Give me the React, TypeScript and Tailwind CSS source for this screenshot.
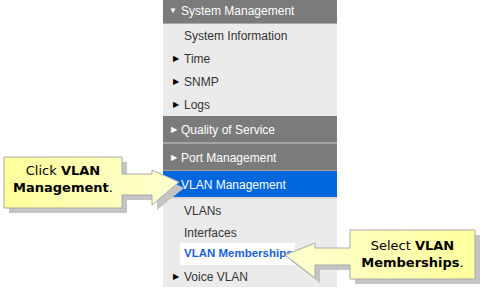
export default function App() {
  const header = "h-[26px] shrink-0 flex items-center pt-[1px] text-white text-[12px] bg-[#7b7b7b]"
  const item = "h-[22px] shrink-0 flex items-center pt-[1px] text-[12px] text-[#333]"

  return (
    <div className="relative w-[487px] h-[295px] bg-white overflow-hidden font-['Liberation_Sans',Arial,sans-serif]">
      {/* menu panel */}
      <div className="ml-[163px] w-[174px] bg-[#ebebeb] flex flex-col">
        <div className={`${header} -mt-[3px] pl-[6px]`}>
          <span className="text-[8px] w-[12px]">▼</span>
          <span>System Management</span>
        </div>
        <div className="h-[1px] bg-[#a9a9a9]" />
        <div className="flex flex-col">
          <div className={`${item} h-[23px] pl-[21px]`}>System Information</div>
          <div className={`${item} h-[23px] pl-[10px]`}>
            <span className="text-[8px] w-[11px] text-black">▶</span>Time
          </div>
          <div className={`${item} h-[23px] pl-[10px]`}>
            <span className="text-[8px] w-[11px] text-black">▶</span>SNMP
          </div>
          <div className={`${item} h-[23px] pl-[10px]`}>
            <span className="text-[8px] w-[11px] text-black">▶</span>Logs
          </div>
        </div>
        <div className={`${header} pl-[8px]`}>
          <span className="text-[8px] w-[10px]">▶</span>
          <span>Quality of Service</span>
        </div>
        <div className="h-[2px] bg-[#a3a3a3]" />
        <div className={`${header} pl-[8px]`}>
          <span className="text-[8px] w-[10px]">▶</span>
          <span>Port Management</span>
        </div>
        <div className="h-[1px] bg-[#a3a3a3]" />
        <div className="h-[26px] shrink-0 flex items-center pt-[1px] text-white text-[12px] bg-[#0066dd] pl-[18px]">
          VLAN Management
        </div>
        <div className="h-[2px] bg-[#d7d7d7]" />
        <div className="flex flex-col">
          <div className={`${item} pl-[21px]`}>VLANs</div>
          <div className={`${item} pl-[21px]`}>Interfaces</div>
          <div className="h-[22px] shrink-0 flex items-stretch pl-[17px]">
            <div className="w-[115px] bg-white flex items-center pl-[4px] whitespace-nowrap font-bold text-[11.5px] text-[#1a5fd6]">
              VLAN Memberships
            </div>
          </div>
          <div className={`${item} h-[21px] pt-[1px] pl-[10px]`}>
            <span className="text-[8px] w-[11px] text-black">▶</span>Voice VLAN
          </div>
        </div>
      </div>

      {/* callouts */}
      <svg className="absolute left-0 top-0" width="487" height="295">
        <defs>
          <linearGradient id="g1" x1="0" x2="1" y1="0" y2="0">
            <stop offset="0" stopColor="#ffff9c" />
            <stop offset="1" stopColor="#ffffd0" />
          </linearGradient>
          <linearGradient id="g2" x1="1" x2="0" y1="0" y2="0">
            <stop offset="0" stopColor="#ffff9c" />
            <stop offset="1" stopColor="#ffffd0" />
          </linearGradient>
        </defs>
        <path d="M9,162 H127 V178 H157 V175 L184,188 L157,210 V200 H127 V213 H9 Z" fill="#c4c4c4" />
        <path
          d="M4,157 H122 V174 H152 V170 L179,182 L152,205 V195 H122 V208 H4 Z"
          fill="url(#g1)"
          stroke="#a8a8a8"
          strokeWidth="1"
        />
        <path d="M355,235 H480 V284 H355 V270 H320 V283 L290,260 L320,248 V253 H355 Z" fill="#c4c4c4" />
        <path
          d="M350,230 H475 V279 H350 V265 H315 V278 L285,255 L315,243 V248 H350 Z"
          fill="url(#g2)"
          stroke="#a8a8a8"
          strokeWidth="1"
        />
      </svg>

      <div className="absolute left-[4px] top-[162px] w-[118px] text-center text-[13px] leading-[17px] text-black font-['DejaVu_Sans',Verdana,sans-serif]">
        Click <b>VLAN</b>
        <br />
        <b>Management</b>.
      </div>
      <div className="absolute left-[350px] top-[237px] w-[125px] text-center text-[13px] leading-[17px] text-black font-['DejaVu_Sans',Verdana,sans-serif]">
        Select <b>VLAN</b>
        <br />
        <b>Memberships</b>.
      </div>
    </div>
  )
}
